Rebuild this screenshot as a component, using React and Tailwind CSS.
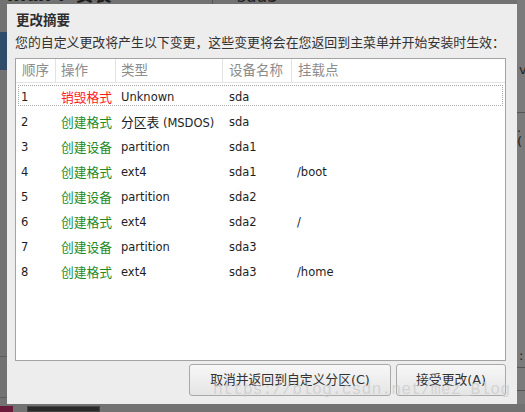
import React from 'react';

const rows = [
  { n: 1, action: '销毁格式', destroy: true, type: 'Unknown', dev: 'sda', mount: '' },
  { n: 2, action: '创建格式', type: '分区表 (MSDOS)', dev: 'sda', mount: '' },
  { n: 3, action: '创建设备', type: 'partition', dev: 'sda1', mount: '' },
  { n: 4, action: '创建格式', type: 'ext4', dev: 'sda1', mount: '/boot' },
  { n: 5, action: '创建设备', type: 'partition', dev: 'sda2', mount: '' },
  { n: 6, action: '创建格式', type: 'ext4', dev: 'sda2', mount: '/' },
  { n: 7, action: '创建设备', type: 'partition', dev: 'sda3', mount: '' },
  { n: 8, action: '创建格式', type: 'ext4', dev: 'sda3', mount: '/home' },
];

function TypeText({ text }) {
  if (text.startsWith('分区表')) {
    return (
      <>
        <span className="text-[12.75px]">分区表</span>
        <span> (MSDOS)</span>
      </>
    );
  }
  return <span>{text}</span>;
}

function Row({ row }) {
  return (
    <div className="px-[2px] pt-[1px]">
      <div
        className={
          'h-[21px] pt-[4px] flex items-center border border-dotted leading-[19px] ' +
          (row.n === 1 ? 'border-[#a8a8a8]' : 'border-transparent')
        }
      >
        <div className="w-[40px] pl-[2px]">{row.n}</div>
        <div
          className={
            'w-[60px] pl-[2px] text-[12.75px] ' +
            (row.destroy ? 'text-[#ff1a1a]' : 'text-[#1f8a1f]')
          }
        >
          {row.action}
        </div>
        <div className="w-[108px] pl-[2px] whitespace-nowrap">
          <TypeText text={row.type} />
        </div>
        <div className="w-[68px] pl-[2px]">{row.dev}</div>
        <div className="flex-1 pl-[2px]">{row.mount}</div>
      </div>
    </div>
  );
}

export default function App() {
  return (
    <div className="relative w-[525px] h-[412px] overflow-hidden bg-[#727272] font-['DejaVu_Sans','Noto_Sans_CJK_SC',sans-serif]">
      {/* dimmed installer page behind the dialog */}
      <div className="flex flex-col h-full">
        <div className="flex h-[404px]">
          <div className="w-[7px] flex flex-col">
            <div className="mt-[32px] h-[38px] bg-[#2f4d6b]" />
            <div className="mt-[286px] h-px bg-[#5e5e5e]" />
            <div className="mt-[40px] h-px bg-[#5e5e5e]" />
          </div>
          <div className="flex-1 flex items-start">
            <div className="w-[205px] -mt-[14px] text-[18px] font-bold text-[#1c1c1c] leading-[18px] whitespace-nowrap">
              inux 7 安装
            </div>
            <div className="w-px h-[6px] bg-[#555]" />
            <div className="-mt-[13px] ml-[24px] text-[17px] text-[#222] leading-[18px]">sda3</div>
          </div>
          <div className="w-[8px] bg-[#7b7b7b] flex flex-col text-[13px] text-[#222] leading-[14px] overflow-hidden">
            <div className="mt-[63px] pl-[2px]">v</div>
            <div className="mt-[35px] h-px bg-[#555]" />
            <div className="mt-[8px]">.(</div>
            <div className="mt-[200px] pl-[2px]">:</div>
            <div className="mt-[4px] h-px bg-[#555]" />
            <div className="mt-[22px] h-px bg-[#555]" />
          </div>
        </div>
        <div className="flex h-[8px]">
          <div className="w-[13px] mt-[2px] bg-[#6a1a3a]" />
          <div className="ml-[14px] w-[73px] mt-[2px] bg-[#2a2a2a] border border-[#444]" />
        </div>
      </div>

      {/* dialog */}
      <div className="absolute left-[7px] top-[4px] w-[510px] h-[400px] bg-[#ededed] flex flex-col pl-[8px] pr-[11px] pb-[8px] text-[#2e2e2e]">
        <div className="pt-[7px] pl-[1px] h-[25px] text-[13.5px] leading-[18px] font-bold">更改摘要</div>
        <div className="mt-[5px] h-[18px] text-[12.9px] leading-[18px] text-[#333] whitespace-nowrap">
          您的自定义更改将产生以下变更，这些变更将会在您返回到主菜单并开始安装时生效：
        </div>
        <div className="mt-[6px] flex-1 flex flex-col bg-white border border-[#a3a3a3]">
          <div className="h-[24px] flex border-b border-[#e3e3e3] text-[13.5px] text-[#8c8c8c]">
            <div className="w-[40px] pl-[6px] flex items-center border-r border-[#e3e3e3]">顺序</div>
            <div className="w-[60px] pl-[5px] flex items-center border-r border-[#e3e3e3]">操作</div>
            <div className="w-[107px] pl-[5px] flex items-center border-r border-[#e3e3e3]">类型</div>
            <div className="w-[69px] pl-[6px] flex items-center border-r border-[#e3e3e3]">设备名称</div>
            <div className="flex-1 pl-[6px] flex items-center">挂载点</div>
          </div>
          <div className="pt-px grid auto-rows-[25px] text-[11.5px] text-[#1e1e1e]">
            {rows.map((r) => (
              <Row key={r.n} row={r} />
            ))}
          </div>
        </div>
        <div className="mt-[3px] flex justify-end gap-[5px]">
          <button className="w-[202px] h-[32px] rounded-[3px] border border-[#a9a9a9] bg-linear-to-b from-[#f7f7f7] to-[#e5e5e5] text-[12.8px] text-[#333]">
            取消并返回到自定义分区(C)
          </button>
          <button className="w-[110px] h-[32px] rounded-[3px] border border-[#a9a9a9] bg-linear-to-b from-[#f7f7f7] to-[#e5e5e5] text-[12.8px] text-[#333]">
            接受更改(A)
          </button>
        </div>
      </div>

      {/* watermark */}
      <div className="absolute left-[213px] top-[382px] text-[16.5px] leading-none font-['Liberation_Mono',monospace] text-[#c9c9c9]/70 pointer-events-none whitespace-nowrap">
        https://blog.csdn.net/mez_Blog
      </div>
    </div>
  );
}
